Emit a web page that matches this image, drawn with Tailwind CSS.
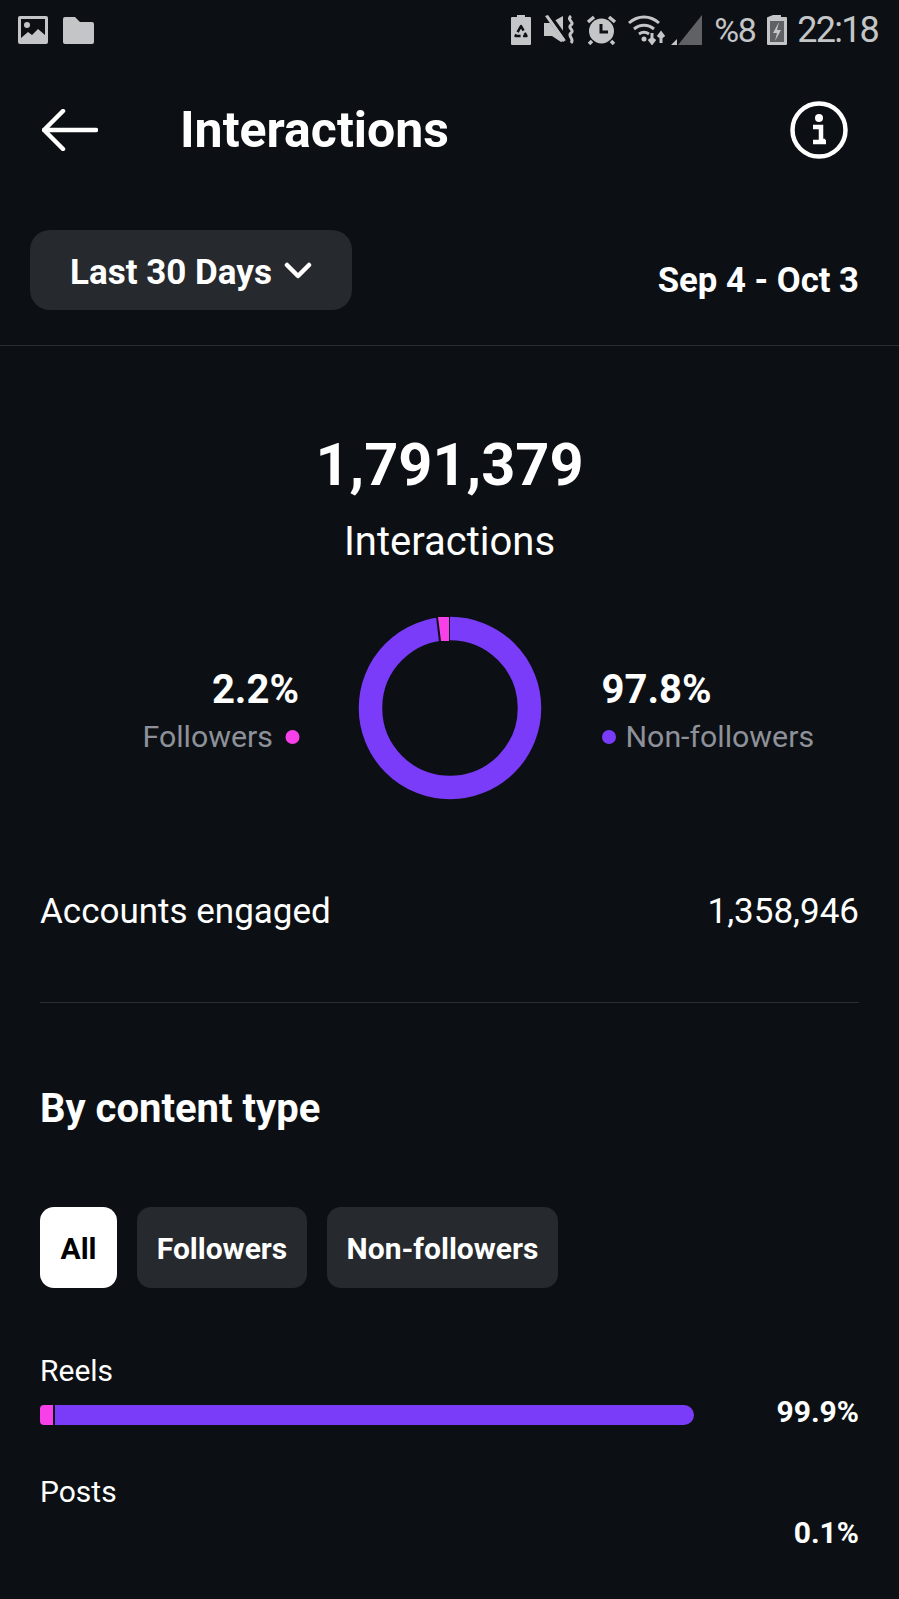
<!DOCTYPE html>
<html lang="en">
<head>
    <meta charset="UTF-8">
    <meta name="viewport" content="width=device-width, initial-scale=1.0">
    <title>Interactions</title>
    <script src="https://cdn.jsdelivr.net/npm/@tailwindcss/browser@4"></script>
</head>
<body class="bg-[#0c1014] font-['Roboto',sans-serif] text-white">
<div class="w-[899px] h-[1599px] overflow-hidden">

    <!-- status bar -->
    <div class="h-[60px] flex items-center justify-between pl-[18px] pr-[21px]">
        <div class="flex items-center gap-[15px]">
            <svg width="30" height="28" viewBox="0 0 30 28"><rect width="30" height="28" rx="2" fill="#c4c5c7"/><rect x="3" y="3" width="24" height="19" fill="#0c1014"/><circle cx="9" cy="9" r="3" fill="#c4c5c7"/><path d="M3 22l7-6 4 3 6-6 7 6v3z" fill="#c4c5c7"/></svg>
            <svg width="31" height="27" viewBox="0 0 31 27"><path d="M0 2a2 2 0 0 1 2-2h10l5 5h12a2 2 0 0 1 2 2v18a2 2 0 0 1-2 2H2a2 2 0 0 1-2-2z" fill="#c4c5c7"/></svg>
        </div>
        <div class="flex items-center text-[#c4c5c7]">
            <svg width="20" height="30" viewBox="0 0 20 30" class="mr-[13px]"><path d="M6 0h8v2h5a1 1 0 0 1 1 1v26a1 1 0 0 1-1 1H1a1 1 0 0 1-1-1V3a1 1 0 0 1 1-1h5z" fill="#c4c5c7"/><path d="M10 11l-5.500 10h11z" fill="none" stroke="#0c1014" stroke-width="2.500" stroke-dasharray="7 2.500" stroke-linejoin="round"/></svg>
            <svg width="31" height="30" viewBox="0 0 31 30" class="mr-[11px]"><path d="M0 8h6l13 18-2 1-9-6H0z" fill="#c4c5c7"/><path d="M10 6l9-5v16z" fill="#c4c5c7"/><path d="M1 1l3-1 18 25-3 2z" fill="#c4c5c7"/><path d="M4.500 0l2.500-1 18 25-2.500 2z" fill="#0c1014"/><path d="M27 1c-5 4 4 6 0 9s4 5 0 8 4 6 0 10" fill="none" stroke="#c4c5c7" stroke-width="3"/></svg>
            <svg width="31" height="30" viewBox="0 0 31 30" class="mr-[10px]"><circle cx="15.500" cy="16" r="12.500" fill="#c4c5c7"/><path d="M15 9v8h7" fill="none" stroke="#0c1014" stroke-width="3"/><path d="M2 7l6-5M29 7l-6-5M6 26l-3 3M25 26l3 3" stroke="#c4c5c7" stroke-width="3.500"/></svg>
            <svg width="41" height="30" viewBox="0 0 41 30" class="mr-[3px]"><path d="M2 8c9-8 21-8 30 0M7 14c6-5 14-5 20 0M12 19c3-2 7-2 10 0" fill="none" stroke="#c4c5c7" stroke-width="3"/><circle cx="17" cy="24" r="2.500" fill="#c4c5c7"/><path d="M25 18v9m-3-3l3 4 3-4M34 28v-9m-3 3l3-4 3 4" fill="none" stroke="#c4c5c7" stroke-width="3"/></svg>
            <svg width="31" height="30" viewBox="0 0 31 30" class="mr-[12px]"><path d="M31 0v30H7z" fill="#5f6164"/><path d="M0 30l6-6v6z" fill="#c4c5c7"/></svg>
            <span class="text-[34px] leading-none tracking-[-1.500px] w-[43px] mr-[10px]">%8</span>
            <svg width="20" height="30" viewBox="0 0 20 30" class="mr-[10px]"><path d="M6 0h8v2h5a1 1 0 0 1 1 1v26a1 1 0 0 1-1 1H1a1 1 0 0 1-1-1V3a1 1 0 0 1 1-1z" fill="#c4c5c7"/><rect x="3" y="6" width="14" height="21" fill="#5f6164"/><path d="M12 7l-6 11h4l-2 8 6-11h-4z" fill="#c4c5c7"/></svg>
            <span class="text-[36px] leading-none tracking-[-1.800px]">22:18</span>
        </div>
    </div>

    <!-- header -->
    <div class="h-[140px] flex items-center pl-[42px] pr-[51px]">
        <svg width="56" height="42" viewBox="0 0 56 42" fill="none" stroke="#fff" stroke-width="4.500" stroke-linecap="round" stroke-linejoin="round"><path d="M54 21H2M21 2L2 21l19 19"/></svg>
        <h1 class="ml-[82px] text-[50px] font-bold leading-none">Interactions</h1>
        <svg class="ml-auto" width="58" height="58" viewBox="0 0 58 58" fill="none"><circle cx="29" cy="29" r="26.500" stroke="#fff" stroke-width="4.500"/><circle cx="29" cy="17" r="4" fill="#fff"/><path d="M23 26h8v14h4M23 41h13" stroke="#fff" stroke-width="4.500"/></svg>
    </div>

    <!-- range -->
    <div class="h-[146px] pt-[30px] pl-[30px] pr-[40px] flex items-start justify-between border-b border-[#2c2e33]">
        <div class="w-[322px] h-[80px] rounded-[20px] bg-[#26292d] flex items-center justify-center gap-[12px]">
            <span class="text-[35px] font-bold mt-[6px]">Last 30 Days</span>
            <svg width="28" height="18" viewBox="0 0 28 18" fill="none" stroke="#fff" stroke-width="4.500" stroke-linecap="round" stroke-linejoin="round" class="mt-[2px]"><path d="M3 3l11 11L25 3"/></svg>
        </div>
        <span class="text-[34.700px] font-bold leading-none mt-[33px]">Sep 4 - Oct 3</span>
    </div>

    <!-- total -->
    <div class="flex flex-col items-center pt-[90px]">
        <div class="text-[59.500px] font-bold leading-none">1,791,379</div>
        <div class="text-[40px] leading-none mt-[26px]">Interactions</div>
    </div>

    <!-- donut -->
    <div class="mt-[54px] h-[184px] flex items-center justify-center gap-[60px]">
        <div class="flex flex-col items-end w-[239px] mt-[8px] translate-x-[1.500px]">
            <span class="text-[40px] font-bold leading-none">2.2%</span>
            <div class="flex items-center gap-[12px] mt-[12px] text-[30.300px] leading-none text-[#8e9199]">Followers<span class="w-[14px] h-[14px] rounded-full bg-[#f840e8]"></span></div>
        </div>
        <svg width="184" height="184" viewBox="0 0 184 184" class="shrink-0">
            <circle cx="92" cy="92" r="79.500" fill="none" stroke="#7a3cf8" stroke-width="23.500"/>
            <path d="M78 0.500L81 26H92V0z" fill="#0c1014"/>
            <path d="M80 1L83 25H91V1z" fill="#f840e8"/>
        </svg>
        <div class="flex flex-col items-start w-[239px] mt-[8px]">
            <span class="text-[40px] font-bold leading-none">97.8%</span>
            <div class="flex items-center gap-[10px] mt-[12px] text-[30.300px] leading-none text-[#8e9199]"><span class="w-[14px] h-[14px] rounded-full bg-[#7a3cf8]"></span>Non-followers</div>
        </div>
    </div>

    <!-- accounts engaged -->
    <div class="mx-[40px] mt-[94px] pb-[73px] border-b border-[#2c2e33] flex items-center justify-between text-[35px] leading-none">
        <span>Accounts engaged</span>
        <span>1,358,946</span>
    </div>

    <!-- by content type -->
    <div class="px-[40px]">
        <h2 class="mt-[86px] text-[40px] font-bold leading-none">By content type</h2>
        <div class="mt-[78px] flex gap-[20px] text-[30px] font-bold">
            <div class="w-[77px] h-[81px] pt-[2px] rounded-[14px] bg-white text-black flex items-center justify-center">All</div>
            <div class="w-[170px] h-[81px] pt-[2px] rounded-[14px] bg-[#26292d] flex items-center justify-center">Followers</div>
            <div class="w-[231px] h-[81px] pt-[2px] rounded-[14px] bg-[#26292d] flex items-center justify-center">Non-followers</div>
        </div>

        <div class="mt-[68px] text-[30px] leading-none">Reels</div>
        <div class="flex items-center justify-between mt-[19px] h-[20px]">
            <div class="w-[654px] h-[20px] flex gap-[2px]">
                <div class="w-[13px] rounded-l-[4px] bg-[#f840e8]"></div>
                <div class="flex-1 rounded-r-[10px] bg-[#7a3cf8]"></div>
            </div>
            <span class="text-[30px] font-bold leading-none -translate-y-[3px]">99.9%</span>
        </div>
        <div class="mt-[52px] text-[30px] leading-none">Posts</div>
        <div class="flex justify-end mt-[11px]">
            <span class="text-[30px] font-bold leading-none">0.1%</span>
        </div>
    </div>
</div>
</body>
</html>
